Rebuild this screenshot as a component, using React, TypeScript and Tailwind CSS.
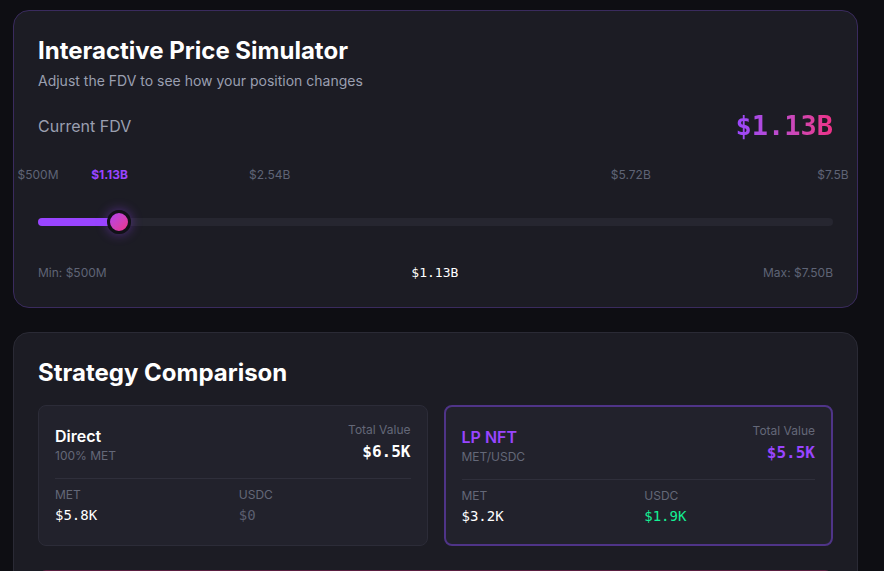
import { useState } from "react";

const MIN = 0.5;
const MAX = 7.5;

const marks = [
    { label: "$500M", value: 0.5, active: false },
    { label: "$1.13B", value: 1.13, active: true },
    { label: "$2.54B", value: 2.54, active: false },
    { label: "$5.72B", value: 5.72, active: false },
    { label: "$7.5B", value: 7.5, active: false },
];

const StrategyCard = ({
    title,
    subtitle,
    total,
    met,
    usdc,
    highlight,
}: any) => {
    return (
        <div
            className={`flex flex-col rounded-lg bg-[#22222c] px-4 pt-4 pb-[18px] ${
                highlight
                    ? "border-2 border-[#4f3488]"
                    : "border border-[#2c2c38]"
            }`}
        >
            <div className="flex justify-between">
                <div className="mt-[2px]">
                    <p
                        className={`text-base font-semibold leading-6 ${
                            highlight ? "text-[#9945ff]" : "text-white"
                        }`}
                    >
                        {title}
                    </p>
                    <p className="text-xs leading-4 text-[#646878]">
                        {subtitle}
                    </p>
                </div>
                <div className="text-right">
                    <p className="text-xs leading-4 text-[#646878]">
                        Total Value
                    </p>
                    <p
                        className={`mt-[2px] font-['DejaVu_Sans_Mono',monospace] text-base font-bold leading-6 ${
                            highlight ? "text-[#9945ff]" : "text-white"
                        }`}
                    >
                        {total}
                    </p>
                </div>
            </div>
            <div className="mt-[14px] grid grid-cols-2 gap-3 border-t border-[#2f2f3b] pt-2">
                <div>
                    <p className="text-xs leading-4 text-[#646878]">MET</p>
                    <p className="mt-0.5 font-['DejaVu_Sans_Mono',monospace] text-sm leading-5 text-white">
                        {met}
                    </p>
                </div>
                <div>
                    <p className="text-xs leading-4 text-[#646878]">USDC</p>
                    <p
                        className={`mt-0.5 font-['DejaVu_Sans_Mono',monospace] text-sm leading-5 ${
                            usdc === "$0" ? "text-[#5b5f70]" : "text-[#14f195]"
                        }`}
                    >
                        {usdc}
                    </p>
                </div>
            </div>
        </div>
    );
};

export default function App() {
    const [fdv] = useState(1.13);
    const pct = (fdv - MIN) / (MAX - MIN);

    return (
        <div className="min-h-screen bg-[#0e0e13] pt-[10px] pl-[13px] pr-[26px] pb-10 font-['Inter',sans-serif]">
            {/* price simulator */}
            <div className="rounded-2xl border border-[#3a2b5e] bg-[#1c1c24] px-6 pt-6 pb-[26px]">
                <h1 className="text-2xl font-bold leading-8 text-white">
                    Interactive Price Simulator
                </h1>
                <p className="mt-1 text-sm leading-5 text-[#9a9fb0]">
                    Adjust the FDV to see how your position changes
                </p>

                <div className="mt-[17px] flex items-center justify-between">
                    <span className="text-base text-[#9a9fb0]">
                        Current FDV
                    </span>
                    <span className="bg-gradient-to-r from-[#9945ff] to-[#ee2f86] bg-clip-text font-['DejaVu_Sans_Mono',monospace] text-[27px] font-bold leading-9 text-transparent">
                        $1.13B
                    </span>
                </div>

                <div className="relative mt-[23px] h-4">
                    {marks.map((m) => (
                        <span
                            key={m.label}
                            className={`absolute top-0 -translate-x-1/2 text-xs leading-4 ${
                                m.active
                                    ? "font-bold text-[#9945ff]"
                                    : "text-[#5f6476]"
                            }`}
                            style={{
                                left: `${((m.value - MIN) / (MAX - MIN)) * 100}%`,
                            }}
                        >
                            {m.label}
                        </span>
                    ))}
                </div>

                <div className="relative mt-[35px] h-2 rounded-full bg-[#262630]">
                    <div
                        className="h-2 rounded-full bg-[#9945ff]"
                        style={{ width: `calc(${pct} * (100% - 24px) + 12px)` }}
                    />
                    <div
                        className="absolute top-1/2 h-6 w-6 -translate-x-1/2 -translate-y-1/2 rounded-full border-[3px] border-[#111118] bg-gradient-to-br from-[#b23df0] to-[#ec2f86] shadow-[0_0_12px_rgba(153,69,255,0.45)]"
                        style={{ left: `calc(${pct} * (100% - 24px) + 12px)` }}
                    />
                </div>

                <div className="mt-[39px] flex items-center justify-between text-xs leading-4">
                    <span className="text-[#5f6476]">Min: $500M</span>
                    <span className="font-['DejaVu_Sans_Mono',monospace] text-[13px] text-white">
                        $1.13B
                    </span>
                    <span className="text-[#5f6476]">Max: $7.50B</span>
                </div>
            </div>

            {/* strategy comparison */}
            <div className="mt-6 rounded-2xl border border-[#2a2a35] bg-[#1c1c24] px-6 pt-6 pb-6">
                <h2 className="text-2xl font-bold leading-8 text-white">
                    Strategy Comparison
                </h2>
                <div className="mt-4 grid grid-cols-2 gap-4">
                    <StrategyCard
                        title="Direct"
                        subtitle="100% MET"
                        total="$6.5K"
                        met="$5.8K"
                        usdc="$0"
                    />
                    <StrategyCard
                        title="LP NFT"
                        subtitle="MET/USDC"
                        total="$5.5K"
                        met="$3.2K"
                        usdc="$1.9K"
                        highlight
                    />
                </div>
                <div className="mt-6 h-24 rounded-lg border border-[#5a1e40] bg-[#22222c]" />
            </div>
        </div>
    );
}
